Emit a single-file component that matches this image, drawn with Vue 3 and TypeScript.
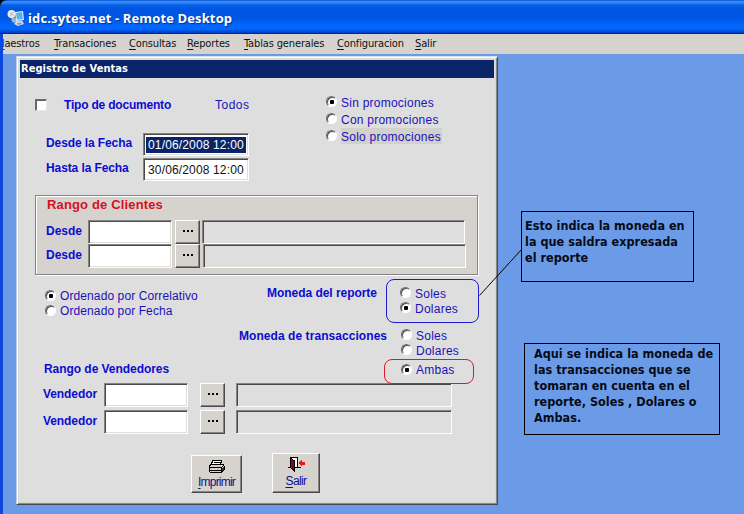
<script setup lang="ts">
import { ref } from 'vue'

const menus: string[] = ['Maestros', 'Transaciones', 'Consultas', 'Reportes', 'Tablas generales', 'Configuracion', 'Salir']
const promos: string[] = ['Sin promociones', 'Con promociones', 'Solo promociones']
const orders: string[] = ['Ordenado por Correlativo', 'Ordenado por Fecha']

const promo = ref('Sin promociones')
const order = ref('Ordenado por Correlativo')
const reportCurrency = ref('Dolares')
const txCurrency = ref('Ambas')

const noteReport: string[] = ['Esto indica la moneda en', 'la que saldra expresada', 'el reporte']
const noteTx: string[] = ['Aqui se indica la moneda de', 'las transacciones que se', 'tomaran en cuenta en el', 'reporte, Soles , Dolares o', 'Ambas.']
</script>

<template>
  <div class="screen">
    <header class="titlebar">
      <svg class="app-icon" width="18" height="18" viewBox="0 0 18 18">
        <path d="M8 3 L16 2 L17 11 L9 12 Z" fill="#e9eef2" />
        <path d="M9 4 L15 3 L16 10 L10 10.5 Z" fill="#55b4ee" />
        <path d="M9 12 L15 11.500 L17 15 L11 17 L7 15 Z" fill="#d6dade" />
        <path d="M10 14 L14 13.500 L15 15 L11 16 Z" fill="#8f9aa8" />
        <path d="M4 8 L9 9 L9 14 L5 13 Z" fill="#9fb6cc" />
        <circle cx="4.500" cy="5" r="4" fill="#eceae2" />
        <path d="M2.500 3.500 L5 5.200 L2.500 7 M6.800 2.800 L4.600 4.800 L6.800 6.600" fill="none" stroke="#a4adb4" stroke-width="0.9" />
      </svg>
      <span class="title">idc.sytes.net - Remote Desktop</span>
    </header>

    <div class="frame">
      <nav class="menubar">
        <span v-for="m in menus" :key="m" class="menu"><u>{{ m[0] }}</u>{{ m.slice(1) }}</span>
      </nav>

      <main class="desktop">
        <section class="dialog">
          <div class="caption">Registro de Ventas</div>

          <div class="top">
            <div class="filters">
              <div class="doc-row">
                <span class="checkbox"></span>
                <b class="doc-label">Tipo de documento</b>
                <span class="text todos">Todos</span>
              </div>
              <div class="date-row">
                <b class="date-label">Desde la Fecha</b>
                <div class="field date"><span class="text sel">01/06/2008 12:00</span></div>
              </div>
              <div class="date-row">
                <b class="date-label">Hasta la Fecha</b>
                <div class="field date"><span class="text">30/06/2008 12:00</span></div>
              </div>
            </div>
            <div class="promos">
              <div v-for="(p, i) in promos" :key="p" class="opt tall" @click="promo = p">
                <i class="radio" :class="{ on: promo === p }"></i>
                <span class="text" :class="{ focus: i === 2 }">{{ p }}</span>
              </div>
            </div>
          </div>

          <div class="group">
            <div class="group-title">Rango de Clientes</div>
            <div v-for="n in 2" :key="n" class="client-row">
              <b class="client-label">Desde</b>
              <div class="field code"></div>
              <button class="btn dots"><i></i><i></i><i></i></button>
              <div class="field name" :class="{ second: n === 2 }"></div>
            </div>
          </div>

          <div class="middle">
            <div class="orders">
              <div v-for="o in orders" :key="o" class="opt" @click="order = o">
                <i class="radio" :class="{ on: order === o }"></i><span class="text ord">{{ o }}</span>
              </div>
              <b class="vend-title">Rango de Vendedores</b>
            </div>
            <div class="currency-labels">
              <b class="lbl-report">Moneda del reporte</b>
              <b class="lbl-tx">Moneda de transacciones</b>
            </div>
            <div class="currencies">
              <div class="mark blue">
                <div v-for="c in ['Soles', 'Dolares']" :key="c" class="opt" @click="reportCurrency = c">
                  <i class="radio" :class="{ on: reportCurrency === c }"></i><span class="text">{{ c }}</span>
                </div>
              </div>
              <div class="tx">
                <div v-for="c in ['Soles', 'Dolares']" :key="c" class="opt" @click="txCurrency = c">
                  <i class="radio" :class="{ on: txCurrency === c }"></i><span class="text">{{ c }}</span>
                </div>
              </div>
              <div class="mark red">
                <div class="opt" @click="txCurrency = 'Ambas'">
                  <i class="radio" :class="{ on: txCurrency === 'Ambas' }"></i><span class="text">Ambas</span>
                </div>
              </div>
            </div>
          </div>

          <div class="vendors">
            <div v-for="n in 2" :key="n" class="vendor-row">
              <b class="vendor-label">Vendedor</b>
              <div class="field vcode"></div>
              <button class="btn dots"><i></i><i></i><i></i></button>
              <div class="field vname"></div>
            </div>
          </div>

          <div class="actions">
            <button class="btn print">
              <svg width="17" height="15" viewBox="0 0 17 15" shape-rendering="crispEdges">
                <path d="M5 1 H14 L12 6 H3 Z" fill="#fff" stroke="#000" />
                <path d="M6 3.500 H12 M5 5.500 H11" stroke="#000" />
                <path d="M1 7.500 L3 5.500 H15 L16 7 V11 L13.500 13.500 H2.500 L1 12 Z" fill="#d6d3ce" stroke="#000" />
                <path d="M1 8.500 H13 V13 M13 8.500 L16 6.500 M2 11.500 H13" fill="none" stroke="#000" />
                <path d="M9 10.500 H11" stroke="#d8d000" />
                <path d="M14 9 V12 M15 8 V11" stroke="#333" />
              </svg>
              <span class="act"><u>I</u>mprimir</span>
            </button>
            <button class="btn exit">
              <svg width="17" height="15" viewBox="0 0 17 15" shape-rendering="crispEdges">
                <path d="M2.500 11 V0.500 H9.500 V10.500" fill="#fff" stroke="#000" />
                <path d="M0 10.500 H2 M7 10.500 H13" stroke="#000" />
                <path d="M2.500 1 L6.500 4 V14 L2.500 10.500 Z" fill="#7b0f1c" stroke="#000" />
                <path d="M10 6 L14 2 V4.500 H16.500 V7.500 H14 V10 Z" fill="#f01414" />
              </svg>
              <span class="act"><u>S</u>alir</span>
            </button>
          </div>
        </section>
      </main>
    </div>

    <svg class="connector" width="43" height="47" viewBox="0 0 43 47">
      <path d="M0.500 46.500 L42.500 0.500" stroke="#000" fill="none" />
    </svg>
    <aside class="note first"><span v-for="t in noteReport" :key="t">{{ t }}</span></aside>
    <aside class="note second-note"><span v-for="t in noteTx" :key="t">{{ t }}</span></aside>
  </div>
</template>

<style>
body { margin: 0; overflow: hidden; }
</style>

<style scoped>
.screen, .screen * { box-sizing: border-box; }
.screen {
  position: relative;
  display: flex;
  flex-direction: column;
  width: 744px;
  height: 514px;
  overflow: hidden;
  background: #000;
  font: 12px "Liberation Sans", Arial, sans-serif;
  color: #1a12b8;
  white-space: nowrap;
}
.titlebar {
  flex: none;
  display: flex;
  height: 34px;
  padding: 9px 0 0 7px;
  border-top-left-radius: 7px;
  background: linear-gradient(#0a48c8 0, #2f8dfc 1.500px, #2a84f6 3px, #0560e8 5px, #0054e2 9px, #0056e6 18px, #0066fc 25px, #0068ff 29px, #0050dc 31px, #003cc0 33px, #0a2670 33px);
}
.app-icon { flex: none; }
.title {
  margin-left: 3px;
  font: bold 13px/18px "Open Sans", sans-serif;
  letter-spacing: 0.13px;
  color: #fff;
  text-shadow: 1px 1px 1px #0a2f90;
}
.frame {
  flex: 1;
  display: flex;
  flex-direction: column;
  border-left: 3px solid #0a48e0;
}
.menubar {
  flex: none;
  display: grid;
  grid-template-columns: 51px 75px 58px 57px 93px 78px 1fr;
  height: 20px;
  overflow: hidden;
  background: #d6d3ce;
  color: #111;
  font: 11px/20px "DejaVu Sans Condensed", "DejaVu Sans", sans-serif;
  letter-spacing: -0.14px;
}
.menu:first-child { margin-left: -7px; }
.menu u, .act u { text-underline-offset: 2px; text-decoration-thickness: 1px; }
.desktop { flex: 1; padding: 2px 0 0 13px; background: #6b9be6; }

.dialog {
  width: 482px;
  height: 449px;
  padding: 3px;
  border: 1px solid;
  border-color: #d6e2f2 #45484c #45484c #b8cdec;
  box-shadow: inset 1px 1px #fff, inset -1px -1px #8c8a84, inset 0 0 0 2px #d8d6d0;
  background: #dedede;
}
.caption {
  height: 18px;
  padding-left: 1px;
  background: #0a246a;
  color: #fff;
  font: bold 11px/18px "DejaVu Sans Condensed", "DejaVu Sans", sans-serif;
  letter-spacing: 0.06px;
}
b { font-weight: bold; color: #0c0cd0; }
.text { letter-spacing: 0.24px; }
.todos { letter-spacing: 0.5px; }

.top { display: grid; grid-template-columns: 306px 1fr; height: 117px; }
.filters { padding-top: 18px; }
.doc-row { display: flex; height: 37px; line-height: 18px; padding-left: 15px; }
.checkbox {
  width: 12px;
  height: 12px;
  margin-top: 3px;
  background: #fff;
  border: 1px solid;
  border-color: #707070 #e8e8e8 #e8e8e8 #707070;
  box-shadow: inset 1px 1px #606060;
}
.doc-label { width: 151px; margin-left: 17px; letter-spacing: -0.2px; }
.date-row { display: flex; height: 25px; padding-left: 26px; line-height: 20px; }
.date-label { width: 97px; letter-spacing: -0.1px; }
.field {
  flex: none;
  height: 24px;
  border: 1px solid;
  border-color: #848484 #fff #fff #848484;
  box-shadow: inset 1px 1px #4a4a4a, inset -1px -1px #e0ded8;
}
.field.date { width: 106px; height: 23px; padding: 3px 2px; background: #fff; line-height: 16px; color: #111; }
.field.date .text { display: block; height: 16px; padding-left: 2px; letter-spacing: 0.15px; }
.field.date .sel { background: #0a246a; color: #fff; }

.promos { padding-top: 16px; }
.opt { display: flex; height: 15px; line-height: 15px; }
.opt.tall { height: 17px; line-height: 18px; }
.radio {
  flex: none;
  position: relative;
  width: 11px;
  height: 11px;
  margin: 1px 4px 0 0;
  border-radius: 50%;
  border: 1px solid;
  border-color: #6a6a6a #fff #fff #6a6a6a;
  background: #fff;
  box-shadow: inset 1px 1px #505050;
}
.tall .radio { margin-top: 2px; }
.radio.on::after {
  content: "";
  position: absolute;
  left: 3px;
  top: 3px;
  width: 4px;
  height: 4px;
  border-radius: 1px;
  background: #000;
}
.focus { height: 16px; padding-right: 1px; background: #d3d1cc; }

.group {
  width: 443px;
  height: 80px;
  margin-left: 15px;
  border: 1px solid #848484;
  box-shadow: inset 1px 1px #fff, 1px 1px #fff;
  background: #d6d3ce;
}
.group-title {
  height: 24px;
  padding-left: 11px;
  font: bold 13px/17px "Liberation Sans", Arial, sans-serif;
  letter-spacing: 0.15px;
  color: #d8101a;
}
.client-row { display: flex; height: 24px; padding-left: 10px; line-height: 22px; }
.client-label { width: 42px; }
.code { width: 84px; background: #fff; }
.client-row .dots { margin: 0 2px 0 3px; }
.name { width: 263px; background: #dedede; }
.name.second { margin-left: 1px; }
.btn {
  flex: none;
  padding: 0;
  border: 1px solid;
  border-color: #fff #4a4a4a #4a4a4a #fff;
  box-shadow: inset -1px -1px #848484;
  background: #d6d3ce;
}
.dots { display: flex; justify-content: center; align-items: center; gap: 2px; width: 25px; height: 24px; padding-bottom: 2px; }
.dots i { width: 2px; height: 2px; background: #000; }

.middle { display: grid; grid-template-columns: 219px 147px 1fr; height: 108px; }
.orders { padding: 14px 0 0 25px; }
.ord { letter-spacing: 0.1px; }
.vend-title { display: block; margin: 43px 0 0 -1px; line-height: 15px; letter-spacing: -0.05px; }
.currency-labels { display: flex; flex-direction: column; padding-top: 11px; line-height: 15px; }
.lbl-report { height: 43px; margin-left: 28px; letter-spacing: -0.04px; }
.lbl-tx { letter-spacing: 0.06px; }
.currencies { display: flex; flex-direction: column; padding-top: 4px; }
.mark { flex: none; border: 1px solid #1c1ccc; border-radius: 8px; }
.mark.blue { width: 93px; height: 44px; padding: 6px 0 0 13px; }
.mark.blue .opt, .tx .opt { line-height: 16px; }
.tx { height: 36px; padding: 5px 0 0 15px; }
.mark.red { position: relative; width: 90px; height: 25px; margin-left: -2px; padding: 3px 0 0 16px; border-color: #d81c2c; }

.vendors { display: flex; flex-direction: column; gap: 3px; }
.vendor-row { display: flex; height: 24px; padding-left: 23px; line-height: 22px; }
.vendor-label { width: 61px; letter-spacing: -0.09px; }
.vcode { width: 84px; background: #fff; }
.vendor-row .dots { margin: 0 11px 0 12px; }
.vname { width: 216px; }

.actions { display: flex; padding: 19px 0 0 171px; }
.print, .exit { display: flex; flex-direction: column; align-items: center; }
.print { width: 51px; height: 38px; margin-top: 2px; padding-top: 3px; }
.exit { width: 48px; height: 40px; margin-left: 30px; padding-top: 3px; }
.act { font: 12px/15px "Liberation Sans", Arial, sans-serif; letter-spacing: -0.8px; color: #10108c; }
.print .act { margin-top: 1px; }
.exit .act { margin-top: 2px; letter-spacing: -0.6px; }

.connector { position: absolute; left: 479px; top: 249px; }
.note {
  position: absolute;
  display: flex;
  flex-direction: column;
  border: 1px solid #000;
  color: #050a18;
  font: bold 12.500px/16px "DejaVu Sans Condensed", "DejaVu Sans", sans-serif;
  letter-spacing: 0.03px;
}
.first { left: 521px; top: 211px; width: 173px; height: 71px; padding: 6px 0 0 3px; }
.second-note { left: 524px; top: 343px; width: 196px; height: 92px; padding: 2px 0 0 9px; }
</style>
